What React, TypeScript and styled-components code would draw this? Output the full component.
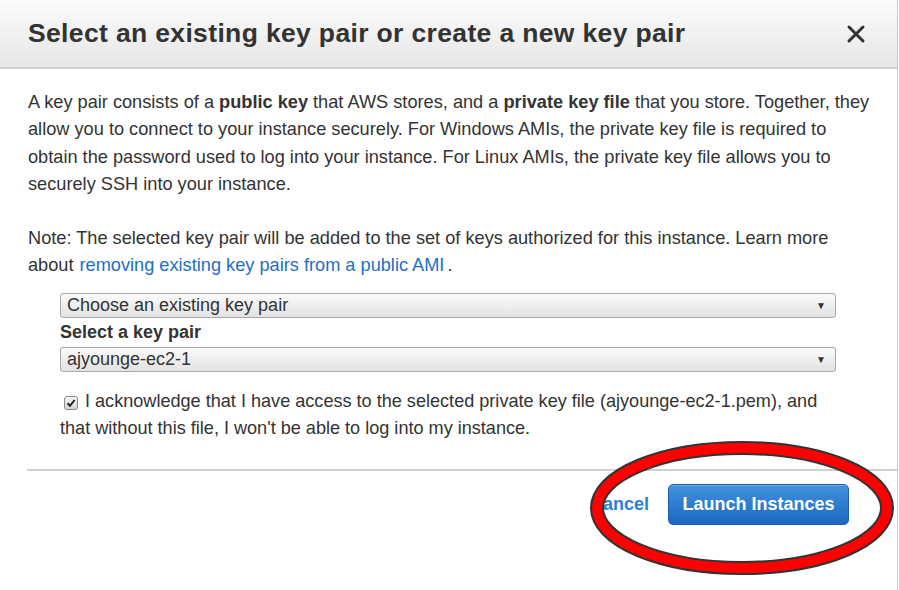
import React from "react";
import styled, { createGlobalStyle } from "styled-components";

const Global = createGlobalStyle`
  html, body { margin: 0; padding: 0; background: #fff; }
  body { font-family: "Liberation Sans", Arial, sans-serif; color: #333; }
`;

const Modal = styled.div`
  position: relative;
  width: 897px;
  height: 590px;
  border-right: 1px solid #c8c8c8;
  background: #fff;
  overflow: hidden;
`;

const Header = styled.div`
  height: 67px;
  display: flex;
  align-items: center;
  justify-content: space-between;
  padding: 0 31px 0 28px;
  background: linear-gradient(#fcfcfc, #e6e6e6);
  border-bottom: 2px solid #d2d2d2;
`;

const Title = styled.h1`
  margin: 0;
  font-size: 26.5px;
  font-weight: bold;
  color: #333;
  letter-spacing: 0.35px;
`;

const CloseIcon = styled.svg`
  display: block;
`;

const Body = styled.div`
  padding: 20px 22px 0 28px;
`;

const Para = styled.p<{ $gap?: number }>`
  margin: 0 0 ${(p) => p.$gap ?? 0}px 0;
  font-size: 18.2px;
  line-height: 27.3px;
  color: #333;
`;

const Link = styled.a`
  color: #1d6fc5;
  text-decoration: none;
  margin: 0 3px 0 6px;
`;

const Fields = styled.div`
  padding: 13px 0 0 60px;
  width: 776px;
  display: flex;
  flex-direction: column;
`;

const Select = styled.div`
  height: 23px;
  border: 1px solid #a9a9a9;
  border-radius: 3px;
  background: linear-gradient(#fbfbfb, #e2e2e2);
  display: flex;
  align-items: center;
  justify-content: space-between;
  padding: 0 9px 0 6px;
  font-size: 18px;
  color: #333;
`;

const Arrow = styled.span`
  font-size: 10px;
  color: #333;
`;

const FieldLabel = styled.div`
  font-weight: bold;
  font-size: 18px;
  line-height: 29px;
  color: #333;
`;

const Ack = styled.label`
  display: block;
  width: 776px;
  padding: 16px 0 0 60px;
  font-size: 18.1px;
  line-height: 27.3px;
  color: #333;
`;

const Box = styled.span`
  display: inline-flex;
  align-items: center;
  justify-content: center;
  box-sizing: border-box;
  width: 14px;
  height: 14px;
  margin: 0 7px 0 4px;
  vertical-align: -1px;
  border: 1px solid #8a8a8a;
  border-radius: 3px;
  background: linear-gradient(#f4f4f4, #d6d6d6);
`;

const Divider = styled.hr`
  margin: 27px 0 0 27px;
  border: 0;
  border-top: 2px solid #d0d0d0;
`;

const Footer = styled.div`
  display: flex;
  justify-content: flex-end;
  align-items: center;
  padding: 13px 48px 0 0;
  gap: 19px;
`;

const Cancel = styled.a`
  font-size: 18px;
  font-weight: bold;
  color: #2a7fd8;
  text-decoration: none;
`;

const Primary = styled.button`
  width: 181px;
  height: 41px;
  border: 1px solid #1b5fb0;
  border-radius: 5px;
  background: linear-gradient(#4192de, #1c68c2);
  color: #fff;
  font-family: "Liberation Sans", Arial, sans-serif;
  font-weight: bold;
  font-size: 18px;
  box-shadow: inset 0 1px 0 rgba(255, 255, 255, 0.25);
`;

const Annotation = styled.svg`
  position: absolute;
  left: 586px;
  top: 436px;
  pointer-events: none;
`;

export default function App() {
  return (
    <>
      <Global />
      <Modal>
        <Header>
          <Title>Select an existing key pair or create a new key pair</Title>
          <CloseIcon width="20" height="20" viewBox="0 0 20 20">
            <path d="M3 3 L17 17 M17 3 L3 17" stroke="#333" strokeWidth="3" strokeLinecap="round" />
          </CloseIcon>
        </Header>
        <Body>
          <Para $gap={27}>
            A key pair consists of a <b>public key</b> that AWS stores, and a{" "}
            <b>private key file</b> that you store. Together, they allow you to
            connect to your instance securely. For Windows AMIs, the private key
            file is required to obtain the password used to log into your
            instance. For Linux AMIs, the private key file allows you to securely
            SSH into your instance.
          </Para>
          <Para>
            Note: The selected key pair will be added to the set of keys
            authorized for this instance. Learn more about
            <Link href="#">removing existing key pairs from a public AMI</Link>.
          </Para>
        </Body>
        <Fields>
          <Select>
            <span>Choose an existing key pair</span>
            <Arrow>▼</Arrow>
          </Select>
          <FieldLabel>Select a key pair</FieldLabel>
          <Select>
            <span>ajyounge-ec2-1</span>
            <Arrow>▼</Arrow>
          </Select>
        </Fields>
        <Ack>
          <Box>
            <svg width="10" height="10" viewBox="0 0 10 10">
              <path d="M1.5 5.2 L4 7.8 L8.6 2" fill="none" stroke="#222" strokeWidth="2" />
            </svg>
          </Box>
          I acknowledge that I have access to the selected private key file
          (ajyounge-ec2-1.pem), and that without this file, I won't be able to
          log into my instance.
        </Ack>
        <Divider />
        <Footer>
          <Cancel href="#">Cancel</Cancel>
          <Primary>Launch Instances</Primary>
        </Footer>
        <Annotation width="312" height="144" viewBox="0 0 312 144">
          <ellipse cx="156" cy="72" rx="145" ry="60" fill="none" stroke="#333" strokeWidth="14" />
          <ellipse cx="156" cy="72" rx="145" ry="60" fill="none" stroke="#ff0000" strokeWidth="10" />
        </Annotation>
      </Modal>
    </>
  );
}
